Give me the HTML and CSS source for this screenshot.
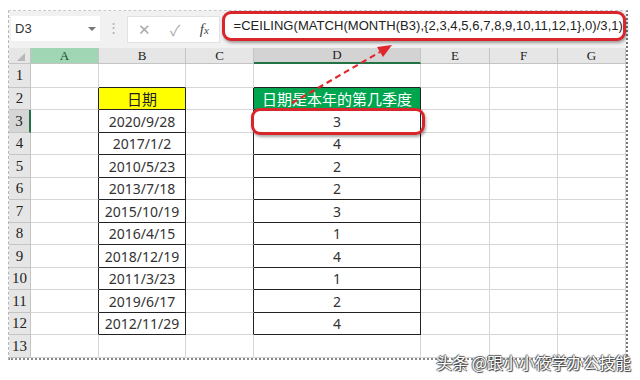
FILE: index.html
```html
<!DOCTYPE html>
<html lang="zh-CN">
<head>
    <meta charset="UTF-8">
    <meta name="viewport" content="width=device-width, initial-scale=1.0">
    <title>CEILING MATCH</title>
    <link rel="stylesheet" href="styles.css">
</head>
<body>
    <div class="sheet">
        <div class="toolbar">
            <div class="namebox">
                <span>D3</span>
                <span class="drop"></span>
            </div>
            <div class="grip">&#8942;</div>
            <div class="fxbox">
                <span class="btn">&#x2715;</span>
                <span class="btn">&#x2713;</span>
                <span class="fx">f<small>x</small></span>
            </div>
            <div class="formula">=CEILING(MATCH(MONTH(B3),{2,3,4,5,6,7,8,9,10,11,12,1},0)/3,1)</div>
        </div>

        <div class="grid">
            <!-- column headers -->
            <div class="corner"><span></span></div>
            <div class="ch hl">A</div>
            <div class="ch">B</div>
            <div class="ch">C</div>
            <div class="ch sel">D</div>
            <div class="ch">E</div>
            <div class="ch">F</div>
            <div class="ch">G</div>

            <div class="rh">1</div><div></div><div class="bb"></div><div></div><div class="bb"></div><div></div><div></div><div></div>

            <div class="rh r2">2</div><div class="br"></div><div class="box yellow">日期</div><div class="br"></div><div class="box green">日期是本年的第几季度</div><div></div><div></div><div></div>
            <div class="rh r3 cur">3</div><div class="br"></div><div class="box">2020/9/28</div><div class="br"></div><div class="box">3</div><div></div><div></div><div></div>
            <div class="rh r2">4</div><div class="br"></div><div class="box">2017/1/2</div><div class="br"></div><div class="box">4</div><div></div><div></div><div></div>
            <div class="rh r3">5</div><div class="br"></div><div class="box">2010/5/23</div><div class="br"></div><div class="box">2</div><div></div><div></div><div></div>
            <div class="rh r2">6</div><div class="br"></div><div class="box">2013/7/18</div><div class="br"></div><div class="box">2</div><div></div><div></div><div></div>
            <div class="rh r3">7</div><div class="br"></div><div class="box">2015/10/19</div><div class="br"></div><div class="box">3</div><div></div><div></div><div></div>
            <div class="rh r2">8</div><div class="br"></div><div class="box">2016/4/15</div><div class="br"></div><div class="box">1</div><div></div><div></div><div></div>
            <div class="rh r3">9</div><div class="br"></div><div class="box">2018/12/19</div><div class="br"></div><div class="box">4</div><div></div><div></div><div></div>
            <div class="rh r2">10</div><div class="br"></div><div class="box">2011/3/23</div><div class="br"></div><div class="box">1</div><div></div><div></div><div></div>
            <div class="rh r3">11</div><div class="br"></div><div class="box">2019/6/17</div><div class="br"></div><div class="box">2</div><div></div><div></div><div></div>
            <div class="rh r2">12</div><div class="br"></div><div class="box">2012/11/29</div><div class="br"></div><div class="box">4</div><div></div><div></div><div></div>
            <div class="rh r3">13</div><div></div><div></div><div></div><div></div><div></div><div></div><div></div>
        </div>
    </div>

    <!-- callout: ring on D3 and arrow to the formula -->
    <div class="ring"></div>
    <svg class="arrow" width="640" height="380" viewBox="0 0 640 380">
        <line x1="292" y1="103" x2="380" y2="52" stroke="#e0262c" stroke-width="2.2" stroke-dasharray="6 4"/>
        <polygon points="392,45 377,47 383,57" fill="#e0262c"/>
    </svg>

    <div class="watermark">头条 @跟小小筱学办公技能</div>
</body>
</html>
```

FILE: styles.css
```css
body {
    margin: 0;
    background: #fff;
    font-family: "Liberation Sans", Arial, sans-serif;
    width: 640px;
    height: 380px;
    position: relative;
    overflow: hidden;
}
.sheet {
    margin: 10px 0 0 8px;
    width: 617px;
    border-left: 1px dashed #b5b5b5;
    border-right: 2px dotted #777;
    border-bottom: 2px dotted #888;
    border-top: 1px dashed #c8c8c8;
}

/* formula bar */
.toolbar {
    display: flex;
    align-items: flex-start;
    height: 37px;
    background: #f1f1f1;
}
.namebox {
    display: flex;
    align-items: center;
    justify-content: space-between;
    width: 90px;
    height: 25px;
    margin: 5px 0 0 2px;
    padding: 0 4px;
    background: #fff;
    font-size: 13px;
    color: #333;
}
.drop {
    width: 0;
    height: 0;
    border-left: 4px solid transparent;
    border-right: 4px solid transparent;
    border-top: 4px solid #777;
}
.grip {
    width: 30px;
    margin-top: 9px;
    text-align: center;
    color: #aaa;
    font-size: 13px;
}
.fxbox {
    display: flex;
    align-items: center;
    justify-content: space-around;
    width: 100px;
    height: 25px;
    margin-top: 5px;
    background: #fff;
    border: 1px solid #e2e2e2;
    color: #a9a9a9;
    font-size: 15px;
}
.fx {
    color: #444;
    font-family: "Liberation Serif", serif;
    font-style: italic;
    font-size: 15px;
}
.fx small { font-size: 11px; }
.formula {
    flex: 1;
    height: 24px;
    margin: 0 0 0 2px;
    padding-left: 9px;
    border: 3px solid #d9262b;
    border-radius: 9px;
    background: #fff;
    box-shadow: 1px 2px 3px rgba(0, 0, 0, 0.35);
    font-size: 13px;
    letter-spacing: 0.05px;
    line-height: 24px;
    color: #222;
    white-space: nowrap;
}

/* cells */
.grid {
    display: grid;
    grid-template-columns: 22px 68px 87px 68px 167px 69px 68px 68px;
    grid-template-rows: 16px 24px repeat(6, 22px 23px);
    font-family: "Noto Sans", "Noto Sans CJK SC", sans-serif;
    font-size: 14px;
    color: #333;
}
.grid > div {
    border-right: 1px solid #d6d6d6;
    border-bottom: 1px solid #d6d6d6;
    display: flex;
    align-items: center;
    justify-content: center;
}
.grid > .corner,
.grid > .ch,
.grid > .rh {
    background: #e6e6e6;
    border-color: #c4c4c4;
    font-family: "Liberation Serif", serif;
    color: #222;
}
.corner span {
    width: 0;
    height: 0;
    margin: 2px 0 0 2px;
    border-left: 8px solid transparent;
    border-bottom: 8px solid #b8b8b8;
}
.ch { font-size: 13px; }
.ch.hl { background: #a0d6b4; color: #1e4d32; }
.ch.sel { background: #d3d3d3; border-bottom: 2px solid #217346; }
.rh { font-size: 15px; }
.rh.cur { border-right: 2px solid #217346; background: #d6d6d6; }
.grid > .br { border-right-color: #222; }
.grid > .bb { border-bottom-color: #222; }
.grid > .box {
    border-right-color: #222;
    border-bottom-color: #222;
}
.yellow { background: #ffff00; font-size: 15px; color: #222; }
.green { background: #00a64f; color: #fff; font-size: 15px; }

/* callouts */
.ring {
    position: absolute;
    left: 251px;
    top: 108px;
    width: 168px;
    height: 21px;
    border: 3px solid #d9262b;
    border-radius: 9px;
    box-shadow: 1px 2px 3px rgba(0, 0, 0, 0.35);
}
.arrow {
    position: absolute;
    left: 0;
    top: 0;
}
.watermark {
    position: absolute;
    right: 9px;
    top: 350px;
    font-family: "Noto Sans CJK SC", sans-serif;
    font-size: 16px;
    color: #fff;
    text-shadow: 1px 1px 1px #333, -1px 0 1px #555, 0 -1px 1px #555;
}
```
